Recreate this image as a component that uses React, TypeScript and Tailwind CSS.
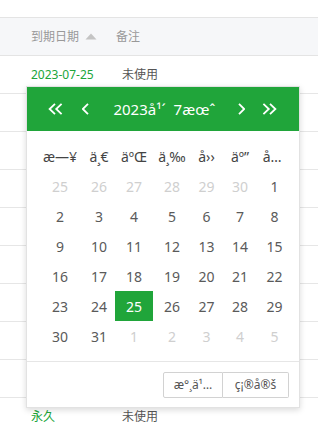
const cols = "grid grid-cols-[46px_32px_38px_38px_31px_36px_33px]";

const weekDays = ["æ—¥", "ä¸€", "äºŒ", "ä¸‰", "å››", "äº”", "å…\u00AD"];

const days: { d: number; muted?: boolean; active?: boolean }[] = [
  ...[25, 26, 27, 28, 29, 30].map((d) => ({ d, muted: true })),
  ...Array.from({ length: 31 }, (_, i) => ({ d: i + 1, active: i + 1 === 25 })),
  ...[1, 2, 3, 4, 5].map((d) => ({ d, muted: true })),
];

function Chevron({ dir, double }: { dir: "left" | "right"; double?: boolean }) {
  const w = double ? 15 : 7;
  const left = double
    ? "M7 0.8 L1.6 6 L7 11.2 M13.6 0.8 L8.2 6 L13.6 11.2"
    : "M6 0.8 L0.8 6 L6 11.2";
  const right = double
    ? "M1.4 0.8 L6.8 6 L1.4 11.2 M8 0.8 L13.4 6 L8 11.2"
    : "M1 0.8 L6.2 6 L1 11.2";
  return (
    <svg width={w} height={12} viewBox={`0 0 ${w} 12`} fill="none">
      <path d={dir === "left" ? left : right} stroke="white" strokeWidth={1.8} />
    </svg>
  );
}

function DatePicker() {
  return (
    <div className="absolute left-[26px] top-[86px] w-[274px] bg-white border border-[#e2e2e2] shadow-[0_2px_6px_rgba(0,0,0,0.15)]">
      <div className="h-[44px] bg-[#20a53a] flex items-center pl-[21px] pr-[22px] text-white text-[14px]">
        <Chevron dir="left" double />
        <span className="ml-[19px]">
          <Chevron dir="left" />
        </span>
        <div className="flex-1 text-center pl-[2px] text-[15px]">
          <span className="px-[4px]">2023å¹´</span>
          <span className="px-[4px]">7æœˆ</span>
        </div>
        <Chevron dir="right" />
        <span className="ml-[17px]">
          <Chevron dir="right" double />
        </span>
      </div>

      <div className="px-[10px] py-[10px] text-[14px]">
        <div className={cols}>
          {weekDays.map((w) => (
            <div key={w} className="h-[30px] flex items-center justify-center text-[#444]">
              {w}
            </div>
          ))}
        </div>
        <div className={cols}>
          {days.map((day, i) => (
            <div
              key={i}
              className={
                day.active
                  ? "h-[30px] flex items-center justify-center bg-[#20a53a] text-white"
                  : day.muted
                  ? "h-[30px] flex items-center justify-center text-[#cfcfcf]"
                  : "h-[30px] flex items-center justify-center text-[#5a5a5a]"
              }
            >
              {day.d}
            </div>
          ))}
        </div>
      </div>

      <div className="border-t border-[#e6e6e6] h-[46px] flex items-center justify-end pr-[10px]">
        <button className="h-[26px] w-[60px] border border-[#d2d2d2] rounded-l-[2px] text-[12px] text-[#555]">
          æ°¸ä¹…
        </button>
        <button className="h-[26px] w-[66px] border border-l-0 border-[#d2d2d2] rounded-r-[2px] text-[12px] text-[#555]">
          ç¡®å®š
        </button>
      </div>
    </div>
  );
}

export default function App() {
  const emptyRows = Array.from({ length: 8 });
  return (
    <div
      className="relative w-[318px] h-[430px] overflow-hidden bg-white text-[12px]"
      style={{ fontFamily: '"Noto Sans", "Noto Sans CJK SC", sans-serif' }}
    >
      <div className="h-[17px]" />
      {/* table header */}
      <div className="h-[39px] bg-[#f6f7f9] border-y border-[#e4e4e4] flex items-center text-[#999]">
        <div className="w-[116px] pl-[31px] flex items-center">
          到期日期
          <svg width="12" height="7" viewBox="0 0 12 7" className="ml-[6px]">
            <path d="M6 0.5 L11.5 6.5 L0.5 6.5 Z" fill="#c4c4c4" />
          </svg>
        </div>
        <div>备注</div>
      </div>
      {/* rows */}
      <div className="h-[38px] border-b border-[#e6e6e6] flex items-center">
        <div className="w-[122px] pl-[31px] text-[#20a53a]">2023-07-25</div>
        <div className="text-[#555]">未使用</div>
      </div>
      {emptyRows.map((_, i) => (
        <div key={i} className="h-[38px] border-b border-[#e6e6e6]" />
      ))}
      <div className="h-[38px] border-b border-[#e6e6e6] flex items-center">
        <div className="w-[122px] pl-[31px] text-[#20a53a]">永久</div>
        <div className="text-[#555]">未使用</div>
      </div>

      <DatePicker />
    </div>
  );
}
